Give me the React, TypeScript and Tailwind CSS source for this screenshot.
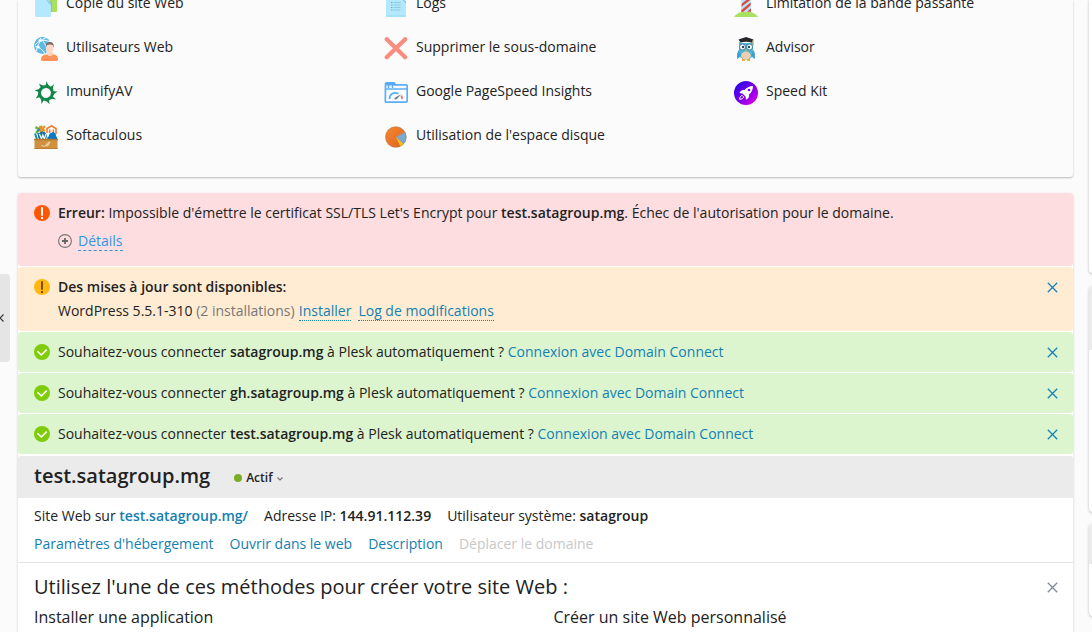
import type { ReactNode } from 'react';

const CopyIcon = () => (
  <svg width="24" height="24" viewBox="0 0 24 24">
    <path d="M9 0h14v17.500a1.500 1.500 0 0 1-1.500 1.500H9z" fill="#a8e05f" />
    <path d="M16.500 4v15H18V9z" fill="#8dc04b" opacity=".6" />
    <path d="M1 3h11l5 7v12.500a1.500 1.500 0 0 1-1.500 1.500h-13A1.500 1.500 0 0 1 1 22.500z" fill="#b3e8ff" />
    <path d="M11.500 6l5.500 7V9z" fill="#8fcdec" />
  </svg>
);

const LogsIcon = () => (
  <svg width="24" height="24" viewBox="0 0 24 24">
    <path d="M2 0h15l5 10v12.500a1.500 1.500 0 0 1-1.500 1.500h-17A1.500 1.500 0 0 1 2 22.500z" fill="#b3e8ff" />
    <path d="M18 6l4 2v3z" fill="#8ccdec" />
    <path d="M2 22h20v.500a1.500 1.500 0 0 1-1.500 1.500h-17A1.500 1.500 0 0 1 2 22.500z" fill="#a5e3fb" />
    <path d="M7 9.500h1.500M7 12h1.500M7 14.500h1.500M7 17h1.500" stroke="#68aecb" />
    <path d="M9.500 9.500H16.500M9.500 12H16.500M9.500 14.500H16.500M9.500 17H16.500" stroke="#8bcbe5" />
  </svg>
);

const LighthouseIcon = () => (
  <svg width="24" height="24" viewBox="0 0 24 24">
    <path d="M0 24c2-3.500 7-5.500 12-5.500s10 2 12 5.500z" fill="#a8e05f" />
    <path d="M7.500 0h9l.5 18.700H7z" fill="#b3e3f5" />
    <path d="M8 10.500L15 5h1.500v1.800L7.400 13.800zM7.300 17.200l9.300-7.700.2 2.500L9.500 18.700H7.200zM13.200 18.700l3.700-3.500.1 3.500z" fill="#e0453f" />
  </svg>
);

const WebUsersIcon = () => (
  <svg width="24" height="24" viewBox="0 0 24 24">
    <circle cx="8.500" cy="8.500" r="8.500" fill="#5fb9e5" />
    <path d="M1 8C5 3 11 2 16 5M2.500 14C3 8 6 3 12 .8M6 .8c5 5 7 9 7 15M1 9c4 1 8 4 10 7.500" fill="none" stroke="#fff" strokeWidth=".9" />
    <circle cx="6" cy="3.500" r="1.500" fill="#fff" />
    <circle cx="4.200" cy="10" r="1.500" fill="#fff" />
    <path d="M13.500 13h5v6h-5z" fill="#fbd2bb" />
    <path d="M7 22.500c0-3 2-5 6-5h5.500c4 0 5.500 2 5.500 5 0 1-1 1.500-2 1.500H9c-1 0-2-.5-2-1.500z" fill="#ff9259" />
    <path d="M12.600 16h6.500l-1 2.300q-2.200 1.700-4.500 0z" fill="#fbd2bb" />
    <ellipse cx="15.700" cy="11.500" rx="3.600" ry="5" fill="#ffd9c5" />
    <path d="M11.900 10.700c-.5-3.300.8-5.700 4-5.700 3.300 0 4.500 2.500 3.500 5.700l-.8-2.600q-2.500-1-5.800 0z" fill="#826c62" />
  </svg>
);

const BLADES = [0, 40, 80, 120, 160, 200, 240, 280, 320];
const ImunifyIcon = () => (
  <svg width="24" height="24" viewBox="0 0 24 24">
    {BLADES.map((a) => (
      <path key={a} d="M12.600.2L15 6.200l1.200 2.400-4.500-2L6.800 4.400l4.800-.2z" fill="#118548" transform={`rotate(${a} 12 12)`} />
    ))}
  </svg>
);

const SoftaculousIcon = () => (
  <svg width="24" height="24" viewBox="0 0 24 24">
    <path d="M1.500 2l7 5M8 1L2 8" stroke="#68b73a" strokeWidth="2.600" />
    <path d="M3.500 6.500l3-4" stroke="#3489c8" strokeWidth="1.500" />
    <path d="M5 1.500L11 6M11 1L6 7" stroke="#f0912f" strokeWidth="2.200" />
    <path d="M13 8V3.500L17.500.8 22 3.500V9M15.700 8V4.500M19.300 8V4.500" fill="none" stroke="#ef7622" strokeWidth="1.500" />
    <path d="M1 8.500l2 6M4 8l2 6" stroke="#168db4" strokeWidth="2" />
    <circle cx="8.500" cy="11" r="4.400" fill="#197299" />
    <path d="M5.500 9l2 5 1.300-4 1.500 4L12 9" fill="none" stroke="#fff" strokeWidth="1.200" />
    <path d="M13 14c0-2 2-2 2-4 1-2.500 3-2 4-3 2 .5 3 2 3 4 1 1 1.200 2 1 3z" fill="#087ac1" />
    <path d="M.5 14h23v10H.5z" fill="#cf913d" />
    <path d="M0 13.800h24v1.500H0z" fill="#b5752a" />
    <path d="M.5 23h23v1H.5z" fill="#b87b30" />
    <path d="M7.500 20c1 3 7 0 8-3-2 0-4 3-3 4s2-1 3.500-4" fill="none" stroke="#f6dfb8" strokeWidth=".9" />
  </svg>
);

const RemoveIcon = () => (
  <svg width="24" height="24" viewBox="0 0 24 24">
    <path d="M2.700 2.200l18.500 18M21.200 2.200l-18.500 18" stroke="#fa8c80" strokeWidth="4.200" strokeLinecap="round" />
  </svg>
);

const PageSpeedIcon = () => (
  <svg width="24" height="24" viewBox="0 0 24 24">
    <path d="M1.500 3.500q0-1.700 1.500-1.700h7l1.500 2H22q1.200 0 1.200 1.300V20q0 1.200-1.200 1.200H2.500q-1.200 0-1.200-1.200z" fill="#f9fcff" stroke="#5cadf8" strokeWidth="1.700" />
    <path d="M1 4.500V3.500q0-2 2-2h7l1.500 2V4.500z" fill="#56aaf5" />
    <path d="M1 8h22M4.500 4v3M8.500 4v3" stroke="#5cadf8" strokeWidth="1.500" />
    <path d="M5.500 18c0-5 4-7.500 9-5.300" fill="none" stroke="#58aef7" strokeWidth="1.700" />
    <path d="M17.300 14.500l1 3.500" stroke="#e86b72" strokeWidth="1.700" />
    <path d="M10.500 17l6.500-3.700-4.300 5q-2.500.6-2.200-1.300z" fill="#687b89" />
  </svg>
);

const PieIcon = () => (
  <svg width="24" height="24" viewBox="0 0 24 24">
    <defs>
      <linearGradient id="pie" x1="0" y1="0" x2="1" y2="1">
        <stop offset="0" stopColor="#f48a32" />
        <stop offset="1" stopColor="#df611e" />
      </linearGradient>
    </defs>
    <circle cx="11.800" cy="12" r="10.500" fill="url(#pie)" />
    <path d="M11.800 12l9.300-4.800a10.500 10.500 0 0 1-1.500 12z" fill="#7ba8d1" />
    <path d="M11.800 12l7.800 7.200a10.500 10.500 0 0 1-3.200 2.200z" fill="#ffc112" />
    <circle cx="11.800" cy="12" r="10.300" fill="none" stroke="#9b7962" strokeWidth=".6" opacity=".6" />
  </svg>
);

const OwlIcon = () => (
  <svg width="24" height="24" viewBox="0 0 24 24">
    <path d="M9.500 20v4M14.500 20v4" stroke="#f5ad33" strokeWidth="3" />
    <path d="M5 5l3 1h8l3-1v8l1.800 4v5L18 20q-6 5-12 0l-2.700 2v-5L5 13z" fill="#4db3dc" />
    <path d="M4.300 13l2.500 5-3.500 4v-5zM19.700 13l-2.500 5 3.500 4v-5z" fill="#3c9ecb" />
    <ellipse cx="12" cy="18.500" rx="4.800" ry="4" fill="#edcfb0" />
    <circle cx="8.500" cy="10" r="3" fill="#fff" stroke="#226d8c" strokeWidth=".8" />
    <circle cx="15.500" cy="10" r="3" fill="#fff" stroke="#226d8c" strokeWidth=".8" />
    <circle cx="9" cy="10" r="1.200" fill="#234858" />
    <circle cx="15" cy="10" r="1.200" fill="#234858" />
    <path d="M10.900 12.500h2.200L12 15.300z" fill="#f4a72e" />
    <path d="M4.500 2.500L12 0l7.500 2.500L18 5.500Q12 4 6.500 5.500z" fill="#26272a" />
    <path d="M19 3v6" stroke="#c2a04d" />
  </svg>
);

const SpeedKitIcon = () => (
  <svg width="24" height="24" viewBox="0 0 24 24">
    <defs>
      <linearGradient id="kit" x1=".1" y1=".1" x2=".9" y2=".9">
        <stop offset="0" stopColor="#2a05e8" />
        <stop offset=".5" stopColor="#7600e8" />
        <stop offset="1" stopColor="#d800e6" />
      </linearGradient>
    </defs>
    <circle cx="12" cy="12" r="12" fill="url(#kit)" />
    <path d="M19 5c-3.800.2-6.500 1.600-8.500 4-2.500-.5-4 .8-5.200 3.100l3.200.5 3 3 .5 3.200c2.300-1 3.500-2.700 3-5.200C17.400 11.500 19 9 19 5z" fill="#fff" />
    <circle cx="15" cy="9" r="1.300" fill="#7600e8" />
    <path d="M8.300 14.500l1.300 1.400c-.5 1.600-1.700 2.400-3.900 2.400 0-2.100.8-3.500 2.600-3.800z" fill="#6a05e9" stroke="#fff" />
  </svg>
);

const Tool = ({ icon, label }: { icon: ReactNode; label: string }) => (
  <li className="flex h-11 items-start gap-2">
    {icon}
    <span className="leading-5">{label}</span>
  </li>
);

const Close = ({ thin = false }: { thin?: boolean }) => (
  <svg width="15" height="15" viewBox="0 0 15 15" className={`mt-[3px] shrink-0 ${thin ? 'text-[#7d8aa0]' : 'text-[#1882b5]'}`}>
    <path d="M2.800 2.800l9.400 9.400M12.200 2.800l-9.400 9.400" stroke="currentColor" strokeWidth="1.300" />
  </svg>
);

const Alert = ({ color, mark }: { color: string; mark: string }) => (
  <svg width="16" height="16" viewBox="0 0 16 16" className="mt-0.5 shrink-0">
    <circle cx="8" cy="8" r="8" fill={color} />
    <path d="M8 2.300v8.500M8 12v2" stroke={mark} strokeWidth="2" />
  </svg>
);

const Check = () => (
  <svg width="16" height="16" viewBox="0 0 16 16" className="mt-0.5 shrink-0">
    <circle cx="8" cy="8" r="8" fill="#7fcc0b" />
    <path d="M3.400 7.200l3.900 3.800 5.400-5.400" fill="none" stroke="#fff" strokeWidth="1.600" />
  </svg>
);

const Connect = ({ domain }: { domain: string }) => (
  <div className="flex h-10 gap-2 rounded-[3px] bg-[#dcf5cf] px-4 pt-2.5 pr-[13px]">
    <Check />
    <p className="flex-1">
      Souhaitez-vous connecter <b className="font-semibold">{domain}</b> à Plesk automatiquement ?{' '}
      <a className="text-[#1480b2]">Connexion avec Domain Connect</a>
    </p>
    <Close />
  </div>
);

export default function App() {
  return (
    <div className="relative flex h-[632px] w-full overflow-hidden bg-[#fbfbfb] font-['Open_Sans',sans-serif] text-sm leading-5 text-[#222]">
      <aside className="mt-[274px] flex h-[88px] w-2.5 shrink-0 items-center rounded-r-[4px] bg-[#e5e5e5]">
        <svg width="6" height="10" viewBox="0 0 6 10">
          <path d="M3.500 1.500L0 5l3.500 3.500" fill="none" stroke="#333" strokeWidth="1.100" />
        </svg>
      </aside>

      <main className="ml-2 w-[1055px] shrink-0">
        <section className="h-[177px] overflow-hidden rounded-b-[3px] bg-[#fbfbfb] shadow-[0_1px_2px_rgba(0,0,0,0.25)]">
          <div className="-mt-[7px] grid grid-cols-[350px_350px_1fr] pl-4">
            <ul>
              <Tool icon={<CopyIcon />} label="Copie du site Web" />
              <Tool icon={<WebUsersIcon />} label="Utilisateurs Web" />
              <Tool icon={<ImunifyIcon />} label="ImunifyAV" />
              <Tool icon={<SoftaculousIcon />} label="Softaculous" />
            </ul>
            <ul>
              <Tool icon={<LogsIcon />} label="Logs" />
              <Tool icon={<RemoveIcon />} label="Supprimer le sous-domaine" />
              <Tool icon={<PageSpeedIcon />} label="Google PageSpeed Insights" />
              <Tool icon={<PieIcon />} label="Utilisation de l'espace disque" />
            </ul>
            <ul>
              <Tool icon={<LighthouseIcon />} label="Limitation de la bande passante" />
              <Tool icon={<OwlIcon />} label="Advisor" />
              <Tool icon={<SpeedKitIcon />} label="Speed Kit" />
            </ul>
          </div>
        </section>

        <section className="mt-4 h-[460px] rounded-[3px] bg-white shadow-[0_1px_3px_rgba(0,0,0,0.18)]">
          <div className="flex flex-col gap-px">
            <div className="flex h-[73px] gap-2 rounded-[3px] bg-[#fddddf] px-4 pt-2.5">
              <Alert color="#ff5500" mark="#fff" />
              <div>
                <p>
                  <b className="font-semibold">Erreur:</b> Impossible d'émettre le certificat SSL/TLS Let's Encrypt pour{' '}
                  <b className="font-semibold">test.satagroup.mg</b>. Échec de l'autorisation pour le domaine.
                </p>
                <div className="mt-2 flex items-start gap-[6px]">
                  <svg width="14" height="14" viewBox="0 0 14 14" className="mt-[3px]">
                    <circle cx="7" cy="7" r="6.400" fill="none" stroke="#777" strokeWidth="1.100" />
                    <path d="M4 7h6M7 4v6" stroke="#666" strokeWidth="1.800" />
                  </svg>
                  <a className="border-b border-dashed border-[#2c98e6] leading-[19px] text-[#2c98e6]">Détails</a>
                </div>
              </div>
            </div>

            <div className="flex h-16 gap-2 rounded-[3px] bg-[#ffecd3] px-4 pt-2.5 pr-[13px]">
              <Alert color="#ffb811" mark="#7e4b00" />
              <div className="flex-1">
                <p className="font-semibold">Des mises à jour sont disponibles:</p>
                <p className="mt-1">
                  WordPress 5.5.1-310 <span className="text-[#777]">(2 installations)</span>{' '}
                  <a className="ml-[0.5px] border-b border-dotted border-[#1480b2] text-[#1480b2]">Installer</a>
                  <a className="ml-[7px] border-b border-dotted border-[#1480b2] text-[#1480b2]">Log de modifications</a>
                </p>
              </div>
              <Close />
            </div>

            <Connect domain="satagroup.mg" />
            <Connect domain="gh.satagroup.mg" />
            <Connect domain="test.satagroup.mg" />
          </div>

          <header className="mt-0.5 flex h-[42px] items-center rounded-t-[3px] bg-[#ebebeb] px-4">
            <h1 className="pb-[3px] text-xl leading-7 font-semibold">test.satagroup.mg</h1>
            <span className="mt-0.5 ml-6 size-2 rounded-full bg-[#7bad24]" />
            <span className="mt-0.5 ml-1 text-xs font-semibold">Actif</span>
            <svg width="6" height="6" viewBox="0 0 6 6" className="mt-1 ml-[5px]">
              <path d="M.5 1.500L3 4l2.500-2.500" fill="none" stroke="#777" strokeWidth="1.200" />
            </svg>
          </header>

          <div className="h-[65px] border-b border-[#e5e5e5] px-4 pt-2">
            <div className="flex gap-4">
              <p>Site Web sur <a className="font-semibold text-[#1480b2]">test.satagroup.mg/</a></p>
              <p>Adresse IP: <b className="font-semibold">144.91.112.39</b></p>
              <p>Utilisateur système: <b className="font-semibold">satagroup</b></p>
            </div>
            <nav className="mt-2 flex gap-4 text-[#1480b2]">
              <a>Paramètres d'hébergement</a>
              <a>Ouvrir dans le web</a>
              <a>Description</a>
              <span className="text-[#c8c8c8]">Déplacer le domaine</span>
            </nav>
          </div>

          <div className="px-4 pt-[10px] pr-[13px]">
            <div className="flex justify-between">
              <h2 className="text-xl leading-7">Utilisez l'une de ces méthodes pour créer votre site Web :</h2>
              <div className="pt-1"><Close thin /></div>
            </div>
            <div className="mt-1 grid grid-cols-2 text-base leading-6">
              <h3>Installer une application</h3>
              <h3 className="pl-[6.5px]">Créer un site Web personnalisé</h3>
            </div>
          </div>
        </section>
      </main>

      <aside className="ml-4 flex w-8 shrink-0 flex-col">
        <div className="h-[273px] rounded-b-[4px] bg-white shadow-[0_1px_3px_rgba(0,0,0,0.25)]" />
        <div className="mt-[13px] h-[226px] overflow-hidden rounded-[4px] bg-white shadow-[0_1px_3px_rgba(0,0,0,0.25)]">
          <div className="h-16 bg-[#ebebeb]" />
        </div>
        <div className="mt-3 h-[92px] overflow-hidden rounded-[4px] bg-white shadow-[0_1px_3px_rgba(0,0,0,0.25)]">
          <div className="h-10 bg-[#ebebeb]" />
        </div>
      </aside>
    </div>
  );
}
